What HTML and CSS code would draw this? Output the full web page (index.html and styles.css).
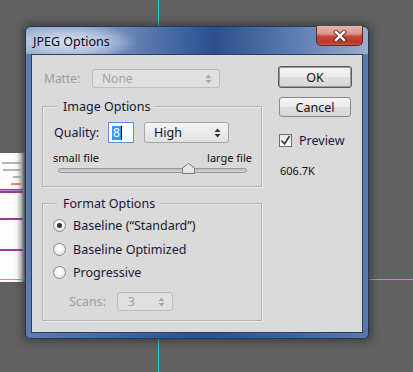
FILE: index.html
```html
<!DOCTYPE html>
<html>
<head>
<meta charset="utf-8">
<link rel="stylesheet" href="styles.css">
</head>
<body>
<div class="desk">
  <div class="guide gv gv-top"></div>
  <div class="guide gv gv-bottom"></div>
  <div class="doc">
    <div class="doc-lines">
      <span class="dl w1"></span><span class="dl w2"></span><span class="dl w3"></span><span class="dl red"></span>
    </div>
    <div class="pbar pb1"></div>
    <div class="pbar pb2"></div>
    <div class="pbar pb3"></div>
  </div>
  <div class="guide gh gh-left"></div>
  <div class="guide gh gh-right"></div>

  <div class="dialog">
    <div class="titlebar">
      <span class="title">JPEG Options</span>
      <div class="close">
        <svg width="18" height="12" viewBox="0 0 18 12">
          <path d="M5 2 L13 10 M13 2 L5 10" stroke="#5a2a26" stroke-width="4.2" stroke-linecap="square"/>
          <path d="M5 2 L13 10 M13 2 L5 10" stroke="#ffffff" stroke-width="2.4" stroke-linecap="square"/>
        </svg>
      </div>
    </div>
    <div class="client">
      <div class="left">
        <div class="matte-row">
          <span class="lbl-matte disabled">Matte:</span>
          <div class="select sel-matte disabled-sel"><span>None</span>
            <svg class="arr" width="7" height="10" viewBox="0 0 7 10"><path d="M3.5 0.5 L6.5 4 L0.5 4 Z M0.5 6 L6.5 6 L3.5 9.5 Z" fill="#a8a8a8"/></svg>
          </div>
        </div>

        <div class="group g-img">
          <span class="legend">Image Options</span>
          <div class="q-row">
            <span class="lbl-q">Quality:</span>
            <div class="qinput"><span class="sel-text">8</span><span class="caret"></span></div>
            <div class="select sel-high"><span>High</span>
              <svg class="arr" width="7" height="10" viewBox="0 0 7 10"><path d="M3.5 0.5 L6.5 4 L0.5 4 Z M0.5 6 L6.5 6 L3.5 9.5 Z" fill="#333"/></svg>
            </div>
          </div>
          <div class="slider-labels"><span>small file</span><span>large file</span></div>
          <div class="slider">
            <div class="track"></div>
            <svg class="thumb" width="13" height="11" viewBox="0 0 13 11" style="left:124px"><path d="M0.5 10.5 L0.5 5 L6.5 0.5 L12.5 5 L12.5 10.5 Z" fill="#e6e6e6" stroke="#7a7a7a"/></svg>
          </div>
        </div>

        <div class="group g-fmt">
          <span class="legend">Format Options</span>
          <div class="radios">
            <div class="radio-row"><span class="radio checked"></span><span>Baseline (“Standard”)</span></div>
            <div class="radio-row"><span class="radio"></span><span>Baseline Optimized</span></div>
            <div class="radio-row"><span class="radio"></span><span>Progressive</span></div>
          </div>
          <div class="scans-row">
            <span class="lbl-scans disabled">Scans:</span>
            <div class="select sel-scans disabled-sel"><span>3</span>
              <svg class="arr" width="7" height="10" viewBox="0 0 7 10"><path d="M3.5 0.5 L6.5 4 L0.5 4 Z M0.5 6 L6.5 6 L3.5 9.5 Z" fill="#a8a8a8"/></svg>
            </div>
          </div>
        </div>
      </div>

      <div class="right">
        <div class="btn btn-ok">OK</div>
        <div class="btn btn-cancel">Cancel</div>
        <div class="check-row">
          <span class="checkbox">
            <svg width="11" height="11" viewBox="0 0 11 11"><path d="M1.5 5.5 L4.5 9 L9.5 1" fill="none" stroke="#333" stroke-width="1.6"/></svg>
          </span>
          <span>Preview</span>
        </div>
        <div class="size">606.7K</div>
      </div>
    </div>
  </div>
</div>
</body>
</html>
```

FILE: styles.css
```css
html, body {
  margin: 0;
  padding: 0;
}
body {
  width: 413px;
  height: 372px;
  overflow: hidden;
  background: #616161;
  font-family: "Noto Sans", "Open Sans", sans-serif;
  font-size: 12px;
  color: #17173a;
}
.desk {
  position: relative;
  width: 413px;
  height: 372px;
}
.guide {
  position: absolute;
  background: #19d6e0;
}
.gv { width: 1px; left: 158px; }
.gv-top { top: 0; height: 26px; }
.gv-bottom { top: 339px; height: 33px; }
.gh { height: 1px; top: 279px; }
.gh-left { left: 0; width: 25px; }
.gh-right { left: 369px; width: 44px; }

.doc {
  position: absolute;
  left: 0;
  top: 153px;
  width: 25px;
  height: 129px;
  background: linear-gradient(to right, #ffffff 0%, #fbfbfb 68%, #d6d6d6 84%, #8a8a8a 96%, #6a6a6a 100%);
}
.doc-lines {
  display: flex;
  flex-direction: column;
  align-items: flex-end;
  gap: 5px;
  padding: 9px 4px 0 0;
}
.dl { display: block; height: 2px; background: #b3b3bd; }
.dl.w1 { width: 19px; }
.dl.w2 { width: 18px; }
.dl.w3 { width: 8px; }
.dl.red { width: 10px; background: #dd8a76; }
.pbar {
  position: absolute;
  left: 0;
  width: 23px;
  height: 2px;
  background: #9a3a96;
}
.pb1 { top: 36px; height: 4px; background: linear-gradient(to bottom, #9a3a96 0 1px, #c58ac2 1px 2px, #9a3a96 2px 4px); }
.pb2 { top: 65px; }
.pb3 { top: 96px; }

.dialog {
  position: absolute;
  left: 25px;
  top: 26px;
  width: 344px;
  height: 313px;
  box-sizing: border-box;
  border: 1px solid #24375a;
  border-radius: 6px 6px 5px 5px;
  background: linear-gradient(to right, #5d7db0 0%, #3d63a0 30%, #2d5190 50%, #3b609c 75%, #5a7aae 100%);
  box-shadow: 0 0 9px 2px rgba(30, 30, 30, 0.55);
  display: flex;
  flex-direction: column;
}
.titlebar {
  position: relative;
  height: 27px;
  border-radius: 5px 5px 0 0;
  background:
    radial-gradient(ellipse 70px 18px at 42px 15px, rgba(220, 229, 242, 0.95) 0%, rgba(200, 212, 232, 0.7) 55%, rgba(200, 212, 232, 0) 100%),
    linear-gradient(to right, #8ea3c6 0%, #7e96bf 22%, #3f64a0 45%, #2c4f8d 55%, #5a7cb0 78%, #9aaecd 100%);
  display: flex;
  align-items: center;
  padding-left: 7px;
}
.title {
  color: #0a0a14;
  font-size: 12.5px;
  margin-top: 2px;
}
.close {
  position: absolute;
  right: 5px;
  top: -1px;
  width: 45px;
  height: 19px;
  border: 1px solid #5e2a24;
  border-top: none;
  border-radius: 0 0 5px 5px;
  background: linear-gradient(to bottom, #e7b3ab 0%, #dc958c 40%, #c7473a 55%, #bb3728 85%, #c9564a 100%);
  display: flex;
  align-items: center;
  justify-content: center;
}

.client {
  flex: 1;
  margin: 0 5px 5px 5px;
  border: 1px solid #2f3f5c;
  background: #dadada;
  display: flex;
  gap: 16px;
  padding: 11px 10px 0 10px;
}
.left {
  width: 220px;
  display: flex;
  flex-direction: column;
}
.disabled { color: #9d9d9d; }

.matte-row {
  margin-top: 3px;
  height: 19px;
  display: flex;
  align-items: center;
}
.lbl-matte {
  width: 48px;
  padding-left: 2px;
}
.select {
  box-sizing: border-box;
  display: flex;
  align-items: center;
  justify-content: space-between;
  border: 1px solid #a5a5a5;
  border-radius: 3px;
  background: linear-gradient(to bottom, #f4f4f4 0%, #ebebeb 50%, #e0e0e0 100%);
  padding: 0 7px 0 9px;
}
.disabled-sel {
  border-color: #bdbdbd;
  background: #e0e0e0;
  color: #a0a0a0;
}
.sel-matte { width: 128px; height: 19px; }
.arr { display: block; }

.group {
  position: relative;
  box-sizing: border-box;
  border: 1px solid #b3b3b3;
  box-shadow: inset 1px 1px 0 #ececec, 1px 1px 0 #ececec;
}
.legend {
  position: absolute;
  top: -9px;
  left: 14px;
  padding: 0 6px;
  background: #dadada;
  font-size: 12.5px;
  line-height: 17px;
}
.g-img {
  margin-top: 18px;
  height: 81px;
  padding: 15px 9px 0 10px;
}
.q-row {
  height: 21px;
  display: flex;
  align-items: center;
  padding-left: 1px;
}
.lbl-q { width: 54px; font-size: 12.5px; }
.qinput {
  box-sizing: border-box;
  width: 26px;
  height: 21px;
  border: 1px solid #5b8fd6;
  background: #ffffff;
  display: flex;
  align-items: center;
  padding-left: 3px;
}
.sel-text {
  background: #3399ff;
  color: #ffffff;
  line-height: 14px;
  padding: 0 1px;
}
.caret {
  width: 1px;
  height: 14px;
  background: #000;
}
.sel-high {
  width: 85px;
  height: 21px;
  margin-left: 10px;
  font-size: 12.5px;
  color: #111;
}
.slider-labels {
  margin-top: 8px;
  height: 14px;
  display: flex;
  justify-content: space-between;
  font-size: 11px;
  line-height: 14px;
  color: #111;
}
.slider {
  position: relative;
  height: 11px;
  margin: 0 5px;
}
.track {
  position: absolute;
  left: 0;
  right: 0;
  top: 3px;
  height: 5px;
  box-sizing: border-box;
  border: 1px solid #9a9a9a;
  border-radius: 3px;
  background: linear-gradient(to bottom, #bcbcbc, #d4d4d4);
}
.thumb {
  position: absolute;
  top: -2px;
}

.g-fmt {
  margin-top: 16px;
  height: 118px;
  padding: 10px 10px 0 10px;
}
.radios {
  display: grid;
  grid-template-rows: 23px 24px 23px;
}
.radio-row {
  display: flex;
  align-items: center;
  gap: 7px;
  font-size: 12.5px;
}
.radio {
  box-sizing: border-box;
  width: 13px;
  height: 13px;
  border-radius: 50%;
  border: 1px solid #8b8b8b;
  background: radial-gradient(circle at 50% 40%, #ffffff 0%, #f0f0f0 50%, #d2d2d2 100%);
  display: flex;
  align-items: center;
  justify-content: center;
}
.radio.checked::after {
  content: "";
  width: 5px;
  height: 5px;
  border-radius: 50%;
  background: #333;
}
.scans-row {
  margin-top: 8px;
  height: 19px;
  display: flex;
  align-items: center;
  padding-left: 16px;
}
.lbl-scans { width: 48px; font-size: 12.5px; }
.sel-scans { width: 56px; height: 19px; padding-left: 10px; }

.right {
  width: 74px;
  display: flex;
  flex-direction: column;
}
.btn {
  box-sizing: border-box;
  display: flex;
  align-items: center;
  justify-content: center;
  border-radius: 3px;
  background: linear-gradient(to bottom, #f6f6f6 0%, #ececec 48%, #dedede 52%, #d8d8d8 100%);
  color: #111;
  font-size: 12.5px;
}
.btn-ok {
  height: 22px;
  border: 1px solid #5a5a5a;
  box-shadow: inset 0 0 0 1px #9a9a9a;
}
.btn-cancel {
  margin: 9px 1px 0 1px;
  height: 20px;
  border: 1px solid #8a8a8a;
}
.check-row {
  margin-top: 17px;
  margin-left: 1px;
  height: 13px;
  display: flex;
  align-items: center;
  gap: 7px;
  font-size: 12.5px;
}
.checkbox {
  box-sizing: border-box;
  width: 13px;
  height: 13px;
  border: 1px solid #6f6f6f;
  background: linear-gradient(to bottom, #e8e8e8, #ffffff);
  display: flex;
  align-items: center;
  justify-content: center;
}
.size {
  margin-top: 17px;
  margin-left: 2px;
  font-size: 11px;
  line-height: 14px;
  color: #111;
}
```
